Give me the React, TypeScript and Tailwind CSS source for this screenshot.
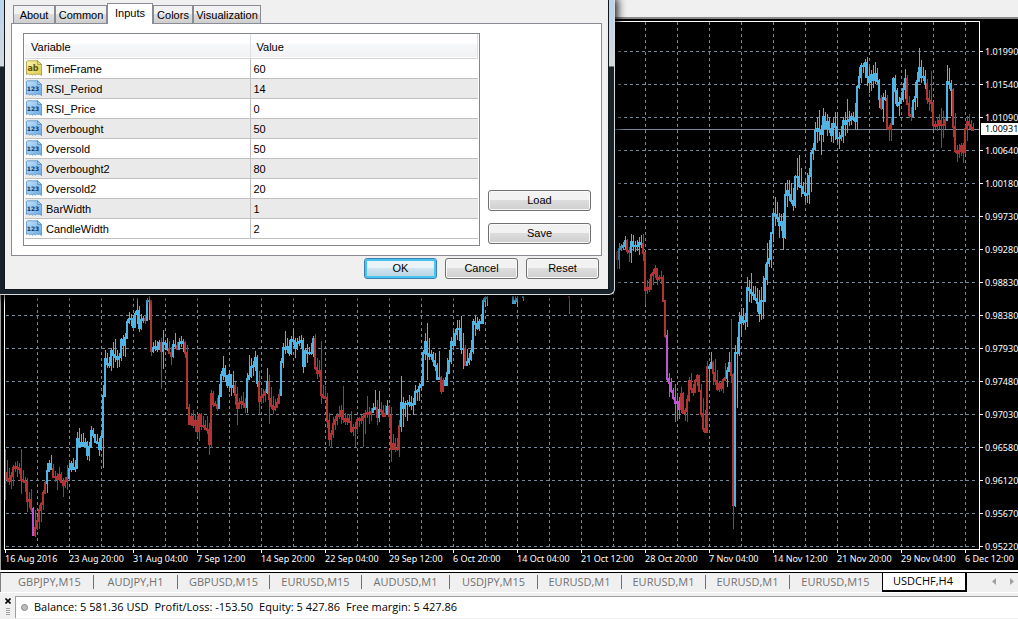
import { useState } from "react";

const CHART_X = 4;
const CHART_Y = 21;
const BAR_STEP = 2;

const VARIABLES = [
  { name: "TimeFrame", value: "60", kind: "ab" },
  { name: "RSI_Period", value: "14", kind: "123" },
  { name: "RSI_Price", value: "0", kind: "123" },
  { name: "Overbought", value: "50", kind: "123" },
  { name: "Oversold", value: "50", kind: "123" },
  { name: "Overbought2", value: "80", kind: "123" },
  { name: "Oversold2", value: "20", kind: "123" },
  { name: "BarWidth", value: "1", kind: "123" },
  { name: "CandleWidth", value: "2", kind: "123" },
];

const DIALOG_TABS = [
  { label: "About", width: "w-[42px]" },
  { label: "Common", width: "w-[52px]" },
  { label: "Inputs", width: "w-[46px]" },
  { label: "Colors", width: "w-[40px]" },
  { label: "Visualization", width: "w-[68px]" },
];

const PRICES = [
  "1.01990", "1.01540", "1.01090", "1.00640", "1.00180", "0.99730", "0.99280", "0.98830",
  "0.98380", "0.97930", "0.97480", "0.97030", "0.96580", "0.96120", "0.95670", "0.95220",
];

const TIMES = [
  "16 Aug 2016", "23 Aug 20:00", "31 Aug 04:00", "7 Sep 12:00", "14 Sep 20:00", "22 Sep 04:00",
  "29 Sep 12:00", "6 Oct 20:00", "14 Oct 04:00", "21 Oct 12:00", "28 Oct 20:00", "7 Nov 04:00",
  "14 Nov 12:00", "21 Nov 20:00", "29 Nov 04:00", "6 Dec 12:00",
];

const CHART_TABS = [
  { label: "GBPJPY,M15", width: "w-[88px]" },
  { label: "AUDJPY,H1", width: "w-[84px]" },
  { label: "GBPUSD,M15", width: "w-[92px]" },
  { label: "EURUSD,M15", width: "w-[92px]" },
  { label: "AUDUSD,M1", width: "w-[88px]" },
  { label: "USDJPY,M15", width: "w-[88px]" },
  { label: "EURUSD,M1", width: "w-[84px]" },
  { label: "EURUSD,M1", width: "w-[84px]" },
  { label: "EURUSD,M1", width: "w-[84px]" },
  { label: "EURUSD,M15", width: "w-[92px]" },
];

// each bar: colour letter, then high, low, close; a bar opens at the previous close
const BARS: [number, number, string][] = [
  [5, 470, "r449,500,472 r460,482,478 r468,485,480 r472,489,475 r465,486,467 r462,472,466 r461,477,467 r463,474,468 r449,494,479 r470,483,480"],
  [25, 480, "r477,492,481 r478,512,500 r492,508,499 r489,512,508 p507,536,534 r510,537,527 r517,530,520 r505,529,509 r502,522,503 r490,510,492"],
  [45, 492, "r481,493,482 b463,493,470 b460,472,463 b455,469,468 r464,477,476 r471,482,476 r473,490,478 r467,481,474 r472,482,481 r478,497,484"],
  [65, 484, "r477,488,480 r465,490,477 b463,478,468 b461,472,463 b458,470,468 b460,472,467 b432,468,438 b428,448,445 b434,447,442 b433,447,445"],
  [85, 445, "b438,446,442 b441,460,454 b442,461,446 b426,448,430 b428,438,434 b435,443,441 b434,444,442 b438,456,448 b433,451,436 b385,468,395"],
  [105, 395, "b350,397,358 b353,368,363 b357,368,364 b348,371,350 b342,368,354 b339,362,356 b350,368,358 b353,367,356 b338,361,339 b335,356,344"],
  [125, 344, "b333,357,337 b319,338,321 b312,324,318 b314,326,318 b315,328,326 b311,328,313 b298,324,310 b306,332,327 b314,330,319 b316,323,318"],
  [145, 318, "r316,324,319 b298,320,300 b296,320,300 r300,356,350 b342,353,347 b340,351,346 b341,352,348 b340,350,342 r338,389,350 b330,369,342"],
  [165, 342, "b340,350,343 b338,351,348 r341,354,352 r347,365,355 b340,358,344 b333,348,345 r342,350,348 b338,349,342 b336,347,341 b339,352,342"],
  [185, 342, "r341,358,352 r345,408,407 r404,425,423 r413,426,416 r410,428,424 r414,432,420 r416,437,430 r413,441,414 r413,430,425 r416,428,425"],
  [205, 425, "r420,430,428 r416,434,429 r423,455,443 r390,448,393 r391,407,403 r401,406,404 r398,411,407 b384,408,395 b371,397,374 b356,380,368"],
  [225, 368, "b365,382,375 b380,388,384 b370,392,374 b374,396,386 b371,393,385 r382,405,394 r387,425,407 r398,409,402 r396,409,401 r392,408,403"],
  [245, 403, "r398,413,406 b373,413,378 b355,379,375 b358,378,366 b361,376,365 b351,371,357 b355,387,382 r371,414,400 r390,404,396 r389,403,394"],
  [265, 394, "r389,402,391 b368,394,381 r375,424,398 r387,409,405 r396,414,408 r399,411,406 r398,408,402 r389,404,394 b358,395,361 b343,368,347"],
  [285, 347, "b331,354,348 b338,353,346 b340,356,352 b336,355,339 b329,345,340 b338,358,347 b338,350,342 b336,346,341 b335,349,340 b338,373,365"],
  [305, 365, "b348,367,350 b344,363,352 b347,355,352 b343,355,352 b336,357,338 r334,370,367 r358,379,372 r360,377,370 r341,404,394 r385,399,396"],
  [325, 396, "r386,398,397 r393,428,420 r413,446,438 r430,448,433 r417,438,423 r416,430,419 r413,425,415 r406,419,415 r405,424,410 r386,423,418"],
  [345, 418, "r413,425,420 r414,425,418 r414,423,421 r411,433,430 r424,436,427 r422,447,427 r417,434,419 r417,427,418 r415,424,419 r413,447,416"],
  [365, 416, "r410,434,413 r396,418,412 r407,424,413 r408,421,411 b403,412,408 b390,410,407 r400,425,416 b391,422,409 r402,415,410 r405,417,415"],
  [385, 415, "r405,417,413 b400,415,406 r405,428,415 r407,462,448 r434,450,443 r438,452,448 r438,451,448 r420,457,425 b376,432,402 b397,427,407"],
  [405, 407, "b401,417,403 b400,421,403 b395,407,402 b396,410,404 b398,415,403 b385,404,391 b389,401,390 b383,401,386 b376,390,384 b350,384,352"],
  [425, 352, "b333,360,341 b323,380,353 b338,360,355 b350,360,354 b352,366,360 b353,371,365 b363,380,378 b351,380,377 r376,394,390 r378,392,380"],
  [445, 380, "b377,386,384 b358,383,372 b350,374,360 b337,364,341 b331,350,344 b329,345,333 b320,340,328 b320,341,328 b316,354,348 b333,369,348"],
  [465, 348, "r345,366,364 b349,366,361 b353,365,358 b340,361,350 b319,354,321 b315,336,323 b317,330,327 b319,331,321 b314,323,322 b298,323,300"],
  [485, 300, "b296,306,297 b296,306,297"],
  [513, 296, "b296,303,302 b296,302,300 b296,306,298"],
  [523, 296, "b296,301,296"],
  [569, 296, "r296,314,296"],
  [617, 252, "r251,269,258 b243,269,248 b244,251,246 b242,250,245 b236,249,240 r239,254,250 r247,262,251 b234,263,241 b235,251,245 b241,252,245"],
  [637, 245, "b240,251,245 b237,255,242 b235,248,243 r234,261,252 r252,304,289 r280,294,287 r279,292,288 r273,290,274 r269,285,272 r265,278,268"],
  [657, 268, "r268,285,278 r275,281,277 r271,284,277 r275,301,300 r300,338,335 p330,381,378 p373,397,382 p378,393,390 p388,400,397 p384,422,402"],
  [677, 402, "p393,420,401 p397,419,408 r387,413,393 r392,414,412 r408,421,410 r395,422,399 r377,402,380 r373,393,388 r384,396,391 r379,393,380"],
  [697, 380, "r374,386,375 r375,392,390 r384,417,413 r398,432,428 r410,433,431 r361,396,366 b367,391,367 b352,368,362 r361,385,372 r359,385,380"],
  [717, 380, "r370,391,388 r381,392,383 r381,391,387 r378,393,379 r363,379,377 b367,387,370 b352,372,362 r319,383,374 r373,529,504 b345,507,352"],
  [737, 352, "b337,408,352 b312,356,322 b308,337,316 b308,325,321 b313,330,320 b277,327,287 b280,302,289 b273,303,292 b286,300,294 b286,301,298"],
  [757, 298, "b288,312,302 b290,322,312 b287,320,300 b276,319,300 b264,301,278 b243,285,262 b240,267,258 b233,268,232 b210,242,213 b197,226,214"],
  [777, 214, "b202,222,217 b213,238,224 b214,231,221 b213,250,236 b183,239,194 b180,207,190 b180,201,194 b183,204,200 b188,211,204 b175,208,176"],
  [797, 176, "b158,190,176 b155,188,185 b168,197,186 b182,194,192 b180,202,194 b173,203,193 b168,204,175 b150,192,152 b143,160,148 b122,151,130"],
  [817, 130, "b117,143,128 b110,141,130 b125,155,133 b108,142,116 b112,129,127 b114,136,121 b118,133,128 b123,142,134 b117,143,123 b112,140,126"],
  [837, 126, "b112,142,137 b132,149,137 b126,141,135 b117,143,120 b112,136,123 b99,133,120 b111,126,119 b113,125,116 b112,121,118 b103,130,120"],
  [857, 120, "b85,130,86 b67,89,76 b63,83,65 b63,73,65 b59,78,62 b57,86,76 b67,93,81 b70,91,74 b65,88,79 b62,84,73"],
  [877, 73, "b68,84,80 b79,108,98 r95,110,107 b93,122,97 b90,101,98 r95,130,127 r125,141,128 r117,141,123 b77,123,78 b75,104,90"],
  [897, 90, "b88,107,104 b97,116,102 b92,103,98 b83,102,88 b69,99,78 r75,105,103 r96,118,114 r107,121,115 b99,115,100 b82,110,96"],
  [917, 96, "b72,107,80 b48,82,67 b60,83,76 b67,81,76 b70,89,83 r79,104,98 r90,111,100 r71,112,102 r102,129,124 r121,129,125"],
  [937, 125, "r117,131,124 r114,129,120 r108,148,124 r111,138,124 r117,129,119 b65,120,81 b68,89,83 b80,116,89 r88,137,126 r113,153,150"],
  [957, 150, "r145,162,152 r144,158,150 r143,156,145 r143,163,151 r125,154,128 r116,141,121 r114,129,124 r120,131,127 r123,131,129"],
];

const BAR_COLORS: Record<string, string> = {
  b: "fill-[#4fb4e4]",
  r: "fill-[#b03434]",
  p: "fill-[#ba55d3]",
};

function PriceChart() {
  const gridX = Array.from({ length: 30 }, (_, i) => 37 + i * 32);
  const gridY = Array.from({ length: 16 }, (_, i) => 51 + i * 33);

  const bars = BARS.flatMap(([startX, startOpen, row]) => {
    let open = startOpen;
    return row.split(" ").map((item, i) => {
      const [high, low, close] = item.slice(1).split(",").map(Number);
      const bar = {
        x: startX + i * BAR_STEP,
        kind: item[0],
        high,
        low,
        top: Math.min(open, close),
        bottom: Math.max(open, close) + 2,
      };
      open = close;
      return bar;
    });
  });

  return (
    <svg
      className="block h-[529px] w-[976px] shrink-0"
      viewBox={`${CHART_X} ${CHART_Y} 976 529`}
      shapeRendering="crispEdges"
      role="img"
      aria-label="USDCHF,H4"
    >
      <g className="stroke-[#778899]" strokeDasharray="3 3">
        {gridX.map((x) => (
          <line key={x} x1={x + 0.5} x2={x + 0.5} y1={22} y2={549} />
        ))}
        {gridY.map((y) => (
          <line key={y} x1={6} x2={976} y1={y + 0.5} y2={y + 0.5} />
        ))}
      </g>
      <line x1={5} x2={979} y1={129.5} y2={129.5} className="stroke-[#778899]" />
      {bars.map((bar) => (
        <g key={bar.x} className={BAR_COLORS[bar.kind]}>
          <rect x={bar.x} y={bar.high} width={1} height={bar.low - bar.high} />
          <rect x={bar.x - 1} y={bar.top} width={2} height={bar.bottom - bar.top} />
        </g>
      ))}
      <rect x={4.5} y={21.5} width={975} height={528} className="fill-none stroke-white" />
    </svg>
  );
}

function ParamIcon({ kind }: { kind: string }) {
  const isText = kind === "ab";
  const stroke = isText ? "#a39334" : "#4f8fc4";
  return (
    <svg width="16" height="16" viewBox="0 0 16 16" className="shrink-0" aria-hidden="true">
      <defs>
        <linearGradient id={`paper-${kind}`} x1="0" y1="0" x2="1" y2="1">
          <stop offset="0" stopColor={isText ? "#fbf6b0" : "#c3e2fb"} />
          <stop offset="1" stopColor={isText ? "#dcc94a" : "#6aa9e0"} />
        </linearGradient>
      </defs>
      <path
        d="M.5 1.5 L1.5 .8 H11.5 L15.5 4.5 V15.5 L13.5 14 L12.5 15 L11 13.5 L9.5 15.2 L8 13.8 L6.5 15.2 L5 13.8 L3.5 15 L2 13.5 L.5 14.5Z"
        fill={`url(#paper-${kind})`}
        stroke={stroke}
        strokeWidth=".8"
      />
      <path d="M11.5 .8 V4.5 H15.5Z" fill={isText ? "#efe48a" : "#9ccbf2"} stroke={stroke} strokeWidth=".8" />
      <text
        x="7"
        y="11"
        textAnchor="middle"
        fontSize={isText ? "8" : "6"}
        className={isText ? "fill-[#5d5006] font-['DejaVu_Sans'] font-bold" : "fill-[#0c3560] font-['DejaVu_Sans'] font-bold"}
      >
        {kind}
      </text>
    </svg>
  );
}

function PushButton({ label, wide, primary }: { label: string; wide?: boolean; primary?: boolean }) {
  return (
    <button
      type="button"
      className={[
        "h-[21px] rounded-[3px] border leading-[19px]",
        wide ? "w-[103px]" : "w-[73px]",
        primary
          ? "border-[#3c7fb1] bg-gradient-to-b from-[#e9f3f8] from-45% via-[#cfe4ef] via-50% to-[#b5d3e3] inset-ring-2 inset-ring-[#48c4f0]"
          : "border-[#707070] bg-gradient-to-b from-[#f2f2f2] from-45% via-[#dddddd] via-50% to-[#cfcfcf] inset-ring inset-ring-[#fafafa]",
      ].join(" ")}
    >
      {label}
    </button>
  );
}

function InputsTable() {
  return (
    <div className="w-[457px] border border-[#828790] bg-white px-px pb-[6px]">
      <table className="w-full table-fixed border-collapse text-left">
        <thead>
          <tr className="h-[24px] border-b border-[#d5d5d5] bg-gradient-to-b from-white from-40% via-[#f7f8fa] via-45% to-[#f1f2f4]">
            <th className="w-[225px] border-r border-[#dedfe1] pt-[2px] pl-[6px] font-normal">Variable</th>
            <th className="border-r border-[#dedfe1] pt-[2px] pl-[6px] font-normal">Value</th>
          </tr>
        </thead>
        <tbody>
          {VARIABLES.map((variable) => (
            <tr key={variable.name} className="h-[20px] border-b border-[#c0c0c0] even:bg-[#eaeaea]">
              <td className="border-r border-[#c0c0c0] p-0">
                <div className="flex items-center gap-1 pl-px">
                  <ParamIcon kind={variable.kind} />
                  <span className="pt-px">{variable.name}</span>
                </div>
              </td>
              <td className="p-0 pt-px pl-[3px]">{variable.value}</td>
            </tr>
          ))}
        </tbody>
      </table>
    </div>
  );
}

function InputsDialog() {
  const [activeTab, setActiveTab] = useState("Inputs");

  return (
    <section
      role="dialog"
      aria-label="Inputs"
      className="absolute top-0 left-0 w-[615px] rounded-br-[6px] border-r border-b border-[#d8dcde] bg-gradient-to-b from-[#bcd5ee] from-[12px] via-[#d5d9dc] via-[66px] to-[#18222b] to-[67px] pr-[5px] pb-1 pl-1 font-['Liberation_Sans',Arial,sans-serif] text-[11px] leading-[16px] text-black shadow-[0_0_10px_2px_#000]"
    >
      <div className="border-x border-b border-[#14181c] bg-[#f0f0f0] pr-[6px] pb-[10px] pl-[6px]">
        <div role="tablist" className="flex h-[23px] items-end pl-[2px]">
          {DIALOG_TABS.map((tab) => (
            <button
              key={tab.label}
              type="button"
              role="tab"
              aria-selected={tab.label === activeTab}
              onClick={() => setActiveTab(tab.label)}
              className={[
                "border border-b-0 border-[#898c95] text-center",
                tab.width,
                tab.label === activeTab
                  ? "relative z-10 -mb-px h-[21px] bg-white pb-[2px]"
                  : "h-[18px] bg-gradient-to-b from-[#f2f2f2] from-45% via-[#dddddd] via-50% to-[#cfcfcf]",
              ].join(" ")}
            >
              {tab.label}
            </button>
          ))}
        </div>
        <div className="flex items-end gap-2 border border-[#898c95] bg-white py-[9px] pl-[11px]">
          <InputsTable />
          <div className="flex flex-col gap-3 pb-[2px]">
            <PushButton label="Load" wide />
            <PushButton label="Save" wide />
          </div>
        </div>
        <div className="flex justify-end gap-2 pt-[2px] pr-[3px]">
          <PushButton label="OK" primary />
          <PushButton label="Cancel" />
          <PushButton label="Reset" />
        </div>
      </div>
    </section>
  );
}

function PriceAxis() {
  return (
    <div className="relative h-[529px] w-[38px] shrink-0 pt-[14px]">
      {PRICES.map((price) => (
        <div key={price} className="flex h-[33px] items-center gap-[2px]">
          <span className="h-px w-[3px] shrink-0 bg-white" />
          <span>{price}</span>
        </div>
      ))}
      <div className="absolute top-[102px] right-0 h-[12px] w-[37px] bg-white pl-1 leading-[12px] text-black">
        1.00931
      </div>
    </div>
  );
}

function ChartWindow() {
  return (
    <main className="relative border-l border-[#a0a0a0] bg-black font-['Noto_Sans',sans-serif] text-[9px] leading-[12px] text-white">
      <div className="h-[19px] border-b-2 border-[#8a8a8a] bg-[#f0f0f0]" />
      <div className="flex pt-[2px] pl-[3px]">
        <div className="flex min-w-0 flex-1 overflow-hidden">
          <PriceChart />
        </div>
        <PriceAxis />
      </div>
      <div className="flex h-[20px] overflow-hidden pl-1">
        {TIMES.map((time) => (
          <div key={time} className="w-[64px] shrink-0 whitespace-nowrap">
            <div className="h-[3px] w-px bg-white" />
            <div>{time}</div>
          </div>
        ))}
      </div>
    </main>
  );
}

function ChartTabs() {
  return (
    <nav className="flex h-[23px] border-t-2 border-b border-white bg-[#f0f0f0] font-['Open_Sans',sans-serif] text-[11px] leading-[16px] text-[#707070]">
      <div className="flex min-w-0 flex-1 border-t border-l border-t-black border-l-[#808080] pl-[5px]">
        {CHART_TABS.map((tab, i) => (
          <button key={i} type="button" className={`flex shrink-0 items-center justify-center pb-[2px] ${tab.width}`}>
            <span className="flex-1">{tab.label}</span>
            <span className={i < CHART_TABS.length - 1 ? "h-[14px] w-px bg-[#707070]" : "w-px"} />
          </button>
        ))}
        <button type="button" className="w-[85px] shrink-0 border border-t-0 border-r-2 border-b-2 border-black bg-white pr-[2px] pb-[2px] text-black">
          USDCHF,H4
        </button>
        <div className="flex flex-1 items-center justify-end gap-[14px] pr-1 pb-[2px]">
          <button type="button" aria-label="Scroll left">
            <svg width="4" height="7" viewBox="0 0 4 7" className="fill-[#a0a0a0]">
              <path d="M4 0 V7 L0 3.5Z" />
            </svg>
          </button>
          <button type="button" aria-label="Scroll right">
            <svg width="4" height="7" viewBox="0 0 4 7" className="fill-[#a0a0a0]">
              <path d="M0 0 V7 L4 3.5Z" />
            </svg>
          </button>
        </div>
      </div>
    </nav>
  );
}

function StatusBar() {
  return (
    <footer className="flex flex-1 bg-[#f0f0f0] pt-[3px] pb-px font-['Open_Sans',sans-serif] text-[11px] text-black">
      <div className="flex w-[15px] shrink-0 flex-col items-center gap-1 pt-[2px]">
        <button type="button" aria-label="Close">
          <svg width="6" height="6" viewBox="0 0 6 6" className="block stroke-black stroke-[1.6]">
            <path d="M.5 .5 L5.5 5.5 M5.5 .5 L.5 5.5" />
          </svg>
        </button>
        <div className="flex flex-col gap-px">
          <span className="h-px w-1 bg-[#a0a0a0]" />
          <span className="h-px w-1 bg-[#a0a0a0]" />
          <span className="h-px w-1 bg-[#a0a0a0]" />
          <span className="h-px w-1 bg-[#a0a0a0]" />
        </div>
      </div>
      <div className="flex flex-1 items-center gap-[6px] border-t border-l border-[#a0a0a0] bg-white pb-px pl-[5px]">
        <span className="size-[7px] rounded-full border border-[#888888] bg-[#bdbdbd]" />
        <p className="flex gap-[6px] leading-[20px] whitespace-nowrap">
          <span>Balance: 5 581.36 USD</span>
          <span>Profit/Loss: -153.50</span>
          <span>Equity: 5 427.86</span>
          <span>Free margin: 5 427.86</span>
        </p>
      </div>
    </footer>
  );
}

export default function App() {
  return (
    <div className="relative flex min-h-screen flex-col overflow-hidden bg-[#f0f0f0]">
      <ChartWindow />
      <ChartTabs />
      <StatusBar />
      <InputsDialog />
    </div>
  );
}
